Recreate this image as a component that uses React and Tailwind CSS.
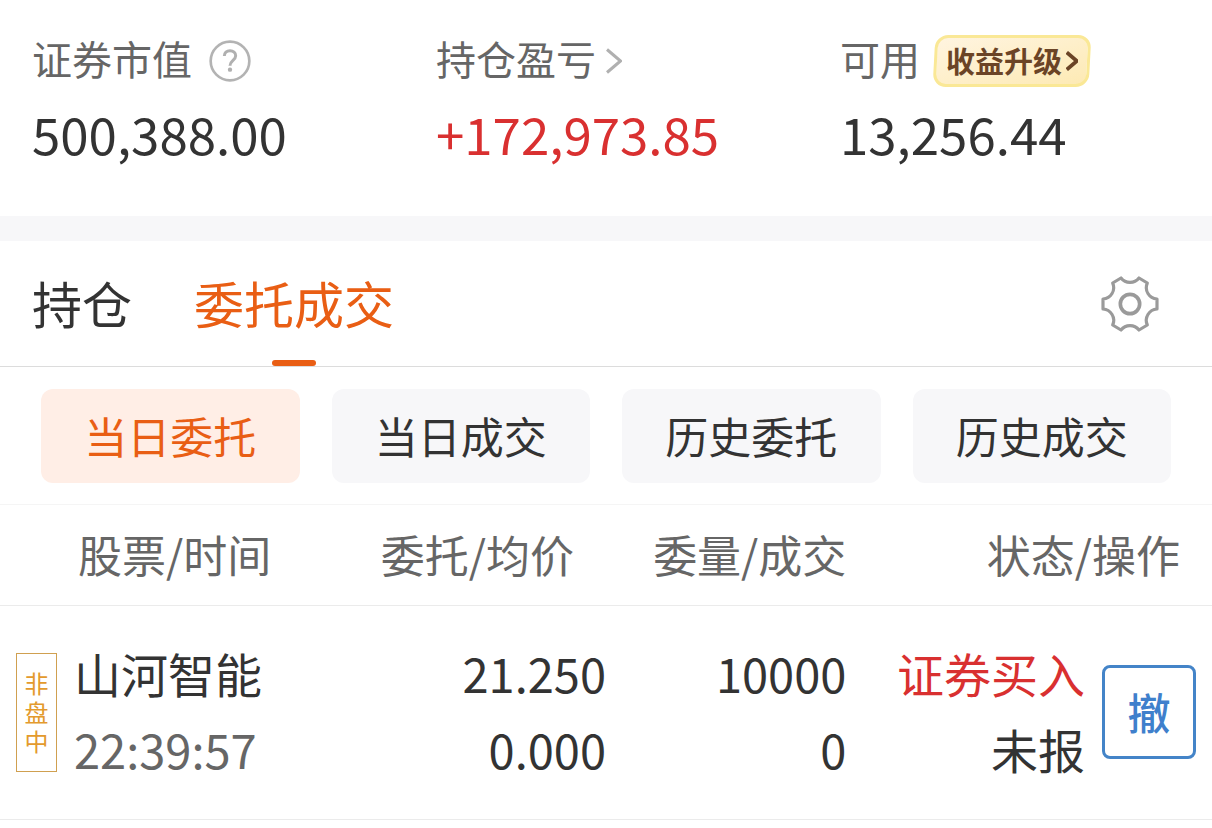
import { useState } from "react";

function HelpIcon() {
  return (
    <svg viewBox="0 0 126 126" className="size-[42px]" fill="none" aria-hidden="true">
      <circle cx="63" cy="63" r="58" stroke="#b3b3b3" strokeWidth="8" />
      <path
        d="M46 48c0-10 7-16 17-16s17 6 17 15c0 14-17 14-17 30"
        stroke="#b0b0b0"
        strokeWidth="9"
      />
      <circle cx="63" cy="89" r="6.5" fill="#b0b0b0" />
    </svg>
  );
}

function Chevron({ className, strokeWidth }) {
  return (
    <svg viewBox="0 0 16 26" className={className} fill="none" stroke="currentColor" aria-hidden="true">
      <path d="M1 1.5 14.5 13 1 24.5" strokeWidth={strokeWidth} />
    </svg>
  );
}

function GearIcon() {
  return (
    <svg viewBox="62 40 180 180" className="size-[60px]" fill="none" stroke="#9a9a9a" strokeWidth="9.5" strokeLinejoin="round" aria-hidden="true">
      <path d="M125 52A34 34 0 0 0 179 52L204 67A34 34 0 0 0 233 115V145A34 34 0 0 0 204 193L179 208A34 34 0 0 0 125 208L100 193A34 34 0 0 0 71 145V115A34 34 0 0 0 100 67Z" />
      <circle cx="152" cy="130" r="29" strokeWidth="11" />
    </svg>
  );
}

function Stat({ label, value, valueClass, gap, children }) {
  return (
    <div className="pl-8">
      <div className={`flex h-[52px] items-center ${gap}`}>
        <span className="pb-1.5 text-[40px] leading-[44px] text-[#666666]">{label}</span>
        {children}
      </div>
      <div className={`mt-3.5 text-[51px] leading-[64px] ${valueClass}`}>{value}</div>
    </div>
  );
}

const tabs = ["持仓", "委托成交"];
const filters = ["当日委托", "当日成交", "历史委托", "历史成交"];

export default function App() {
  const [tab, setTab] = useState("委托成交");
  const [filter, setFilter] = useState("当日委托");

  return (
    <main className="min-h-screen bg-white font-['Noto_Sans_CJK_SC',sans-serif] whitespace-nowrap text-[#333333]">
      <section className="grid grid-cols-3 pt-[35px] pb-[51px]">
        <Stat label="证券市值" value="500,388.00" valueClass="text-[#333333]" gap="gap-[17px]">
          <button type="button" aria-label="证券市值说明">
            <HelpIcon />
          </button>
        </Stat>
        <Stat label="持仓盈亏" value="+172,973.85" valueClass="text-[#d93030]" gap="gap-[10px]">
          <button type="button" aria-label="查看持仓盈亏" className="text-[#b0b0b0]">
            <Chevron className="h-[26px] w-4" strokeWidth="3" />
          </button>
        </Stat>
        <Stat label="可用" value="13,256.44" valueClass="text-[#333333]" gap="gap-[14px]">
          <button
            type="button"
            className="relative isolate flex h-[52px] items-center gap-1 px-3 text-[29px] font-bold text-[#6b4426]"
          >
            <span className="absolute inset-0 -z-10 -skew-x-3 rounded-[13px] border-3 border-[#fae896] bg-linear-to-br from-[#fff4e0] to-[#fdeab4]" />
            <span className="pb-0.5 leading-[44px]">收益升级</span>
            <Chevron className="h-5 w-3" strokeWidth="5" />
          </button>
        </Stat>
      </section>

      <div className="h-[25px] bg-[#f7f7f9]" />

      <nav className="flex items-center justify-between border-b border-[#dcdcdc] pr-[52px] pl-8">
        <div className="flex gap-[62px]">
          {tabs.map((name) => (
            <button
              key={name}
              type="button"
              onClick={() => setTab(name)}
              className={`flex flex-col items-center pt-[31px] text-[50px] leading-[60px] ${
                tab === name ? "text-[#e95e14]" : "text-[#333333]"
              }`}
            >
              {name}
              <span className={`mt-7 h-[6px] w-11 rounded-full ${tab === name ? "bg-[#e95e14]" : "bg-transparent"}`} />
            </button>
          ))}
        </div>
        <button type="button" aria-label="设置">
          <GearIcon />
        </button>
      </nav>

      <div className="grid grid-cols-4 gap-8 border-b border-[#f5f5f5] px-[41px] pt-[22px] pb-[21px]">
        {filters.map((name) => (
          <button
            key={name}
            type="button"
            onClick={() => setFilter(name)}
            className={`h-[94px] rounded-xl pb-0.5 text-[43px] leading-[60px] ${
              filter === name ? "bg-[#ffeee6] text-[#e95e14]" : "bg-[#f7f7f9] text-[#333333]"
            }`}
          >
            {name}
          </button>
        ))}
      </div>

      <table className="w-full table-fixed border-collapse">
        <thead>
          <tr className="h-[100px] border-b border-[#ebebeb] text-[44px] leading-[60px] text-[#666666]">
            <th className="w-[27%] pb-0.5 pl-[78px] text-left font-normal">股票/时间</th>
            <th className="w-[23%] pr-8 pb-0.5 text-right font-normal">委托/均价</th>
            <th className="w-[20%] pr-0.5 pb-0.5 text-right font-normal">委量/成交</th>
            <th className="w-[30%] pr-8 pb-0.5 text-right font-normal">状态/操作</th>
          </tr>
        </thead>
        <tbody>
          <tr className="h-[214px] border-b border-[#ebebeb] text-[47px] leading-[76px]">
            <td className="pl-4">
              <div className="flex items-center gap-[17px]">
                <div className="flex h-[119px] w-[41px] items-center justify-center border border-[#d0a050] text-[24px] leading-[29px] text-[#e39a2d]">
                  <span className="w-6 pb-0.5 break-all whitespace-normal">非盘中</span>
                </div>
                <div className="pb-0.5">
                  <div>山河智能</div>
                  <div className="text-[#666666]">22:39:57</div>
                </div>
              </div>
            </td>
            <td className="pb-0.5 text-right">
              <div>21.250</div>
              <div>0.000</div>
            </td>
            <td className="pr-0.5 pb-0.5 text-right">
              <div>10000</div>
              <div>0</div>
            </td>
            <td className="pr-4">
              <div className="flex items-center justify-end gap-[17px]">
                <div className="pb-0.5 text-right">
                  <div className="text-[#d93030]">证券买入</div>
                  <div>未报</div>
                </div>
                <button
                  type="button"
                  className="size-[94px] rounded-lg border-3 border-[#4484c8] pb-0.5 text-[43px] leading-[60px] font-medium text-[#3f80cc]"
                >
                  撤
                </button>
              </div>
            </td>
          </tr>
        </tbody>
      </table>
    </main>
  );
}
